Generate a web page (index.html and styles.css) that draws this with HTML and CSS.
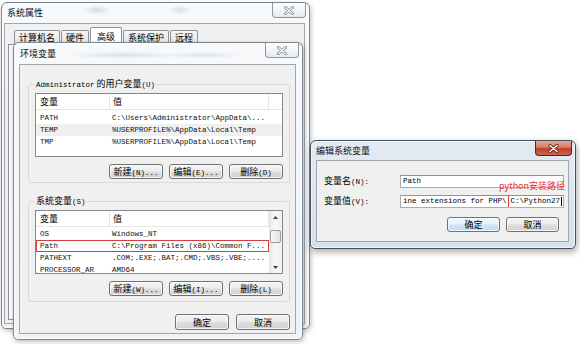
FILE: index.html
```html
<!DOCTYPE html>
<html lang="zh-CN">
<head>
<meta charset="utf-8">
<title>环境变量</title>
<link rel="stylesheet" href="styles.css">
</head>
<body>
<div class="desk">
  <section class="win win-sys">
    <header class="tbar">
      <span class="ttl">系统属性</span>
      <span class="close"><svg width="10" height="9" viewBox="0 0 10 9"><path d="M1.5 1.5L8.5 7.5M8.5 1.5L1.5 7.5" stroke="#7a828c" stroke-width="2.8" stroke-linecap="round"/><path d="M1.5 1.5L8.5 7.5M8.5 1.5L1.5 7.5" stroke="#fdfdfd" stroke-width="1.2" stroke-linecap="round"/></svg></span>
    </header>
    <div class="client sys-client">
      <nav class="tabs">
        <span class="tab">计算机名</span>
        <span class="tab">硬件</span>
        <span class="tab on">高级</span>
        <span class="tab">系统保护</span>
        <span class="tab">远程</span>
      </nav>
      <div class="tabpage"></div>
    </div>
  </section>

  <section class="win win-env">
    <header class="tbar">
      <span class="ttl">环境变量</span>
      <span class="close"><svg width="10" height="9" viewBox="0 0 10 9"><path d="M1.5 1.5L8.5 7.5M8.5 1.5L1.5 7.5" stroke="#7a828c" stroke-width="2.8" stroke-linecap="round"/><path d="M1.5 1.5L8.5 7.5M8.5 1.5L1.5 7.5" stroke="#fdfdfd" stroke-width="1.2" stroke-linecap="round"/></svg></span>
    </header>
    <div class="client env-client">
      <fieldset class="grp">
        <legend><span class="m">Administrator</span> 的用户变量<span class="m">(U)</span></legend>
        <div class="list">
          <div class="lmain">
            <div class="lhead"><span class="c1">变量</span><span class="c2">值</span><span class="c3"></span></div>
            <div class="rows m">
              <div class="row"><span class="c1">PATH</span><span class="c2">C:\Users\Administrator\AppData\...</span></div>
              <div class="row sel"><span class="c1">TEMP</span><span class="c2">%USERPROFILE%\AppData\Local\Temp</span></div>
              <div class="row"><span class="c1">TMP</span><span class="c2">%USERPROFILE%\AppData\Local\Temp</span></div>
            </div>
          </div>
        </div>
        <div class="btns">
          <button class="btn">新建<span class="m">(N)...</span></button>
          <button class="btn">编辑<span class="m">(E)...</span></button>
          <button class="btn">删除<span class="m">(D)</span></button>
        </div>
      </fieldset>

      <fieldset class="grp grp2">
        <legend>系统变量<span class="m">(S)</span></legend>
        <div class="list">
          <div class="lmain">
            <div class="lhead"><span class="c1">变量</span><span class="c2">值</span></div>
            <div class="rows rows2 m">
              <div class="row"><span class="c1">OS</span><span class="c2">Windows_NT</span></div>
              <div class="row mark"><span class="c1">Path</span><span class="c2">C:\Program Files (x86)\Common F...</span></div>
              <div class="row"><span class="c1">PATHEXT</span><span class="c2">.COM;.EXE;.BAT;.CMD;.VBS;.VBE;....</span></div>
              <div class="row"><span class="c1">PROCESSOR_AR</span><span class="c2">AMD64</span></div>
            </div>
          </div>
          <div class="sbar">
            <span class="arr"><svg width="5" height="3" viewBox="0 0 5 3"><path d="M0 3L2.5 0L5 3Z" fill="#3c3c3c"/></svg></span>
            <span class="thumb"></span>
            <span class="arr arr-dn"><svg width="5" height="3" viewBox="0 0 5 3"><path d="M0 0L2.5 3L5 0Z" fill="#3c3c3c"/></svg></span>
          </div>
        </div>
        <div class="btns">
          <button class="btn">新建<span class="m">(W)...</span></button>
          <button class="btn">编辑<span class="m">(I)...</span></button>
          <button class="btn">删除<span class="m">(L)</span></button>
        </div>
      </fieldset>

      <div class="foot">
        <button class="btn">确定</button>
        <button class="btn">取消</button>
      </div>
    </div>
  </section>

  <section class="win win-edit">
    <header class="tbar">
      <span class="ttl">编辑系统变量</span>
      <span class="close close-red"><svg width="11" height="9" viewBox="0 0 11 9"><path d="M2 1.5L9 7.5M9 1.5L2 7.5" stroke="#5e1f16" stroke-width="3" stroke-linecap="round"/><path d="M2 1.5L9 7.5M9 1.5L2 7.5" stroke="#ffffff" stroke-width="1.5" stroke-linecap="round"/></svg></span>
    </header>
    <div class="client edit-client">
      <div class="field">
        <span class="flabel">变量名<span class="m">(N):</span></span>
        <span class="inp m">Path</span>
      </div>
      <div class="field">
        <span class="flabel">变量值<span class="m">(V):</span></span>
        <span class="inp m"><span class="scroll">ine extensions for PHP\</span><span class="hl">C:\Python27<i class="caret"></i></span></span>
      </div>
      <div class="ebtns">
        <button class="btn btn-def">确定</button>
        <button class="btn">取消</button>
      </div>
    </div>
  </section>

  <span class="note">python安装路径</span>
</div>
</body>
</html>
```

FILE: styles.css
```css
* { box-sizing: border-box; }
html, body { margin: 0; padding: 0; }
body {
  width: 580px;
  height: 344px;
  overflow: hidden;
  background: #ffffff;
  font-family: "Noto Sans CJK SC", "Liberation Sans", sans-serif;
  font-size: 9px;
  line-height: 1.2;
  color: #000;
}
.m {
  font-family: "Liberation Mono", "Noto Sans CJK SC", monospace;
  font-size: 7.5px;
}
.desk { position: relative; width: 580px; height: 344px; overflow: hidden; }

/* windows */
.win {
  position: absolute;
  display: flex;
  flex-direction: column;
  border: 1px solid #7b8590;
  border-radius: 6px 6px 5px 5px;
  background: linear-gradient(#f7f9fb, #eff2f5);
  box-shadow: inset 0 0 0 1px rgba(255,255,255,.85), 1px 2px 5px rgba(0,0,0,.25);
}
.win-sys { left: 1px; top: 2px; width: 309px; height: 327px; }
.win-sys .tbar {
  background:
    radial-gradient(ellipse 14px 5px at 95px 7px, rgba(120,170,220,.35), transparent),
    radial-gradient(ellipse 12px 5px at 178px 7px, rgba(120,170,220,.3), transparent);
}
.win-env { left: 13px; top: 42px; width: 290px; height: 298px; }
.win-env .tbar {
  background:
    radial-gradient(ellipse 60px 4px at 110px 12px, rgba(150,165,185,.28), transparent),
    radial-gradient(ellipse 40px 4px at 190px 12px, rgba(150,165,185,.25), transparent);
}
.win-edit {
  left: 310px; top: 140px; width: 266px; height: 109px;
  border-color: #44505e;
  background: linear-gradient(#e3eaf2, #d6e0ea);
  box-shadow: inset 0 0 0 1px rgba(255,255,255,.7), 1px 3px 7px rgba(0,0,0,.35);
}

.tbar {
  flex: none;
  display: flex;
  justify-content: space-between;
  align-items: flex-start;
  height: 20px;
  line-height: 20px;
  padding-left: 5px;
}
.win-env .tbar { height: 21px; line-height: 21px; padding-left: 6px; }
.win-edit .tbar { height: 19px; line-height: 19px; padding-left: 5px; }
.ttl { color: #101010; }

.close {
  width: 34px;
  height: 15px;
  margin-right: 3px;
  display: flex;
  align-items: center;
  justify-content: center;
  border: 1px solid #8d96a0;
  border-top: 0;
  border-radius: 0 0 4px 4px;
  background: linear-gradient(#ffffff, #e6eaee);
}
.close-red {
  width: 37px;
  margin-right: 3px;
  border-color: #5f2219;
  background: linear-gradient(#e9aa9b 0%, #d67a66 45%, #be4128 55%, #cb6851 100%);
}
.close svg { display: block; }

.client {
  flex: 1;
  display: flex;
  flex-direction: column;
  border: 1px solid #9ea7b1;
  background: #f0f0f0;
}
.sys-client { margin: 0 4px 4px 2px; }
.env-client { margin: 0 6px 5px 5px; }
.edit-client { margin: 0 6px 6px 5px; padding: 14px 4px 0 7px; }

/* tabs */
.tabs {
  flex: none;
  display: flex;
  align-items: flex-end;
  height: 20px;
  padding-left: 9px;
}
.tab {
  height: 14px;
  padding: 0 4px;
  margin-right: 1px;
  border: 1px solid #8e9199;
  border-bottom: 0;
  border-radius: 2px 2px 0 0;
  background: linear-gradient(#f6f6f6, #e2e2e2);
  line-height: 13px;
}
.tab.on { height: 17px; padding: 2px 6px 0; background: #ffffff; }
.tabpage {
  flex: 1;
  margin: 0 2px 3px 3px;
  border: 1px solid #8e9199;
  background: #fbfbfb;
}

/* group boxes */
.grp {
  margin: 14px 5px 0 8px;
  padding: 4px 6px 3px 6px;
  min-width: 0;
  border: 1px solid #d3dbe1;
  border-radius: 3px;
}
.grp legend {
  padding: 0 1px;
  height: 10px;
  line-height: 10px;
}
.grp2 { margin-top: 13px; padding-bottom: 5px; }

/* list views */
.list {
  display: flex;
  height: 64px;
  border: 1px solid #828790;
  background: #ffffff;
  overflow: hidden;
}
.lmain { flex: 1; min-width: 0; display: flex; flex-direction: column; }
.lhead {
  flex: none;
  display: flex;
  height: 16px;
  line-height: 15px;
  border-bottom: 1px solid #e6e6e6;
}
.lhead .c1, .lhead .c2 { border-right: 1px solid #e6e6e6; }
.lhead .c2 { padding-left: 3px; }
.c1 { flex: none; width: 74px; padding-left: 4px; white-space: nowrap; overflow: hidden; }
.c2 { flex: none; width: 159px; padding-left: 2px; white-space: nowrap; overflow: hidden; }
.c3 { flex: 1; }
.rows { padding-top: 2px; }
.rows2 { padding-top: 1px; }
.row { display: flex; height: 12px; line-height: 12px; color: #111; }
.row.sel { background: #f0f0f0; }
.row.mark { box-shadow: inset 0 0 0 1px #d63c40; }

.sbar {
  flex: none;
  width: 13px;
  display: flex;
  flex-direction: column;
  align-items: center;
  background: linear-gradient(to right, #e6e6e6, #f6f6f6 40%, #f1f1f1);
}
.arr { height: 12px; display: flex; align-items: center; justify-content: center; }
.arr svg { display: block; }
.arr-dn { margin-top: auto; }
.thumb {
  margin-top: 7px;
  width: 11px;
  height: 13px;
  border: 1px solid #999ea5;
  border-radius: 2px;
  background: linear-gradient(to right, #f7f7f7, #e2e2e2);
}

/* buttons */
.btns { display: flex; justify-content: flex-end; gap: 6px; margin-top: 7px; }
.foot { display: flex; justify-content: flex-end; gap: 7px; margin: 12px 5px 0 0; }
.btn {
  width: 54px;
  height: 15px;
  padding: 0;
  border: 1px solid #707070;
  border-radius: 3px;
  background: linear-gradient(#f4f4f4 0%, #ececec 48%, #dddddd 52%, #d1d1d1 100%);
  box-shadow: inset 0 0 0 1px rgba(255,255,255,.75);
  font-family: "Noto Sans CJK SC", "Liberation Sans", sans-serif;
  font-size: 9px;
  line-height: 13px;
  color: #000;
  white-space: nowrap;
}
.foot .btn { height: 16px; }

/* edit dialog */
.field { display: flex; align-items: center; height: 13px; }
.field + .field { margin-top: 7px; }
.flabel { flex: none; width: 76px; }
.inp {
  flex: none;
  display: flex;
  width: 164px;
  height: 13px;
  padding-left: 2px;
  border: 1px solid #abadb3;
  border-top-color: #8f9399;
  background: #ffffff;
  overflow: hidden;
  white-space: nowrap;
  line-height: 11px;
}
.scroll { flex: none; }
.hl {
  flex: none;
  display: flex;
  align-items: center;
  margin: -1px -1px -1px 1px;
  padding: 0 1px 0 2px;
  border: 1px solid #e0383c;
  line-height: 11px;
}
.caret { display: block; width: 1px; height: 9px; margin-left: 1px; background: #000; }
.ebtns { display: flex; justify-content: flex-end; gap: 6px; margin: 9px 5px 0 0; }
.ebtns .btn { width: 53px; }
.btn-def {
  border-color: #3c7fb1;
  background: linear-gradient(#f1f8fd 0%, #e4f0f9 48%, #d2e5f3 52%, #c6dcee 100%);
}

.note {
  position: absolute;
  left: 499px;
  top: 181px;
  font-size: 9px;
  line-height: 10px;
  color: #e5303a;
  white-space: nowrap;
}
```
